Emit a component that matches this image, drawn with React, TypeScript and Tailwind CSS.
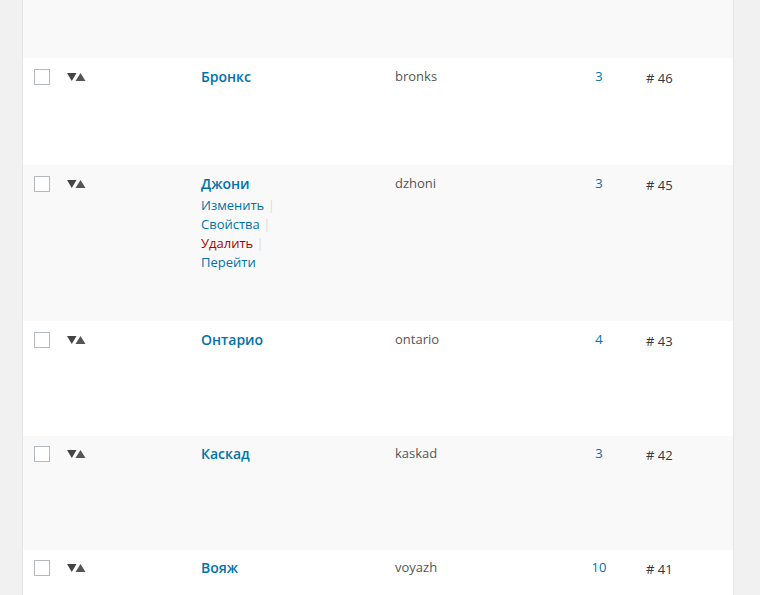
type Term = {
  name: string;
  slug: string;
  count: string;
  id: string;
  height: string;
  striped: boolean;
  actions?: boolean;
  up?: boolean;
};

const terms: Term[] = [
  { name: 'Бронкс', slug: 'bronks', count: '3', id: '# 46', height: 'h-[107px]', striped: false },
  { name: 'Джони', slug: 'dzhoni', count: '3', id: '# 45', height: 'h-[156px]', striped: true, actions: true },
  { name: 'Онтарио', slug: 'ontario', count: '4', id: '# 43', height: 'h-[115px]', striped: false },
  { name: 'Каскад', slug: 'kaskad', count: '3', id: '# 42', height: 'h-[114px]', striped: true, up: true },
  { name: 'Вояж', slug: 'voyazh', count: '10', id: '# 41', height: 'h-[114px]', striped: false, up: true },
];

function SortArrows() {
  return (
    <svg width="19" height="8" viewBox="0 0 19 8" className="mt-[15px]">
      <polygon points="0,0 9.5,0 4.75,8" fill="#444" />
      <polygon points="8.5,8 13.5,0 18.5,8" fill="#555" />
    </svg>
  );
}

function Sep() {
  return <span className="text-[#ddd]"> |</span>;
}

function Row({ term }: { term: Term }) {
  return (
    <div
      className={`flex flex-col ${term.height} ${term.striped ? 'bg-[#f9f9f9]' : 'bg-white'}`}
    >
      <div
        className={`grid grid-cols-[44px_134px_194px_165px_78px_1fr] ${term.up ? '-mt-px' : ''}`}
      >
        <div className="pl-[11px] pt-[11px]">
          <div className="w-4 h-4 border border-[#b4b9be] bg-white" />
        </div>
        <div>
          <SortArrows />
        </div>
        <div className="pt-[9px]">
          <div className="text-[14px] leading-5 font-semibold text-[#0073aa]">{term.name}</div>
          {term.actions && (
            <div className="flex flex-col text-[13px] leading-[19px] mt-[2px]">
              <span className="text-[#0073aa]">
                Изменить<Sep />
              </span>
              <span className="text-[#0073aa]">
                Свойства<Sep />
              </span>
              <span className="text-[#a00]">
                Удалить<Sep />
              </span>
              <span className="text-[#0073aa]">Перейти</span>
            </div>
          )}
        </div>
        <div className="pt-[8px] text-[13px] leading-5 text-[#555]">{term.slug}</div>
        <div className="pt-[8px] text-[13px] leading-5 text-[#0073aa] text-center">{term.count}</div>
        <div className="pt-[10px] pl-[8px] text-[13px] leading-5 text-[#32373c]">{term.id}</div>
      </div>
    </div>
  );
}

export default function App() {
  return (
    <div className="h-[595px] overflow-hidden bg-[#f1f1f1] font-['Open_Sans',sans-serif]">
      <div className="ml-[22px] w-[712px] h-full border-x border-[#e5e5e5] bg-white">
        <div className="h-[58px] bg-[#f9f9f9]" />
        {terms.map((t) => (
          <Row key={t.id} term={t} />
        ))}
      </div>
    </div>
  );
}
